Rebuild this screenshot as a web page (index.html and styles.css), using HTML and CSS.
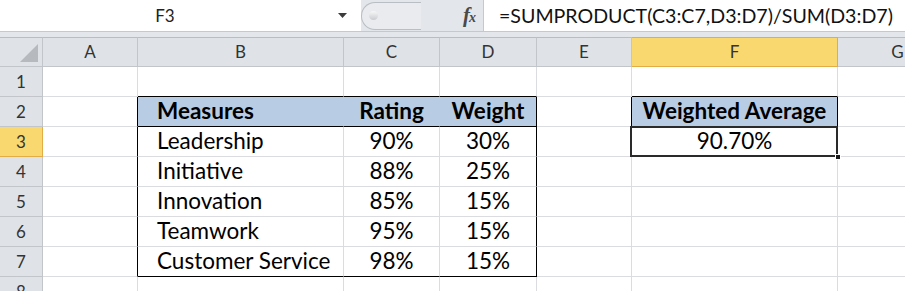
FILE: index.html
```html
<!DOCTYPE html>
<html lang="en">
<head>
    <meta charset="UTF-8">
    <meta name="viewport" content="width=device-width, initial-scale=1.0">
    <title>Weighted Average</title>
    <link rel="stylesheet" href="styles.css">
</head>
<body>
    <div class="formula-bar">
        <div class="name-box">
            <span class="cell-name">F3</span>
            <svg class="drop" width="9" height="5" viewBox="0 0 9 5"><path d="M0 0H9L4.5 5Z" fill="#3c3c3c"/></svg>
        </div>
        <div class="fx-area">
            <div class="pill"><span class="knob"></span></div>
            <span class="fx"><i>f</i><i class="fx-x">x</i></span>
        </div>
        <div class="formula">=SUMPRODUCT(C3:C7,D3:D7)/SUM(D3:D7)</div>
    </div>
    <div class="band"></div>

    <table class="sheet">
        <colgroup>
            <col style="width:43px">
            <col style="width:95px">
            <col style="width:206px">
            <col style="width:96px">
            <col style="width:97px">
            <col style="width:95px">
            <col style="width:206px">
            <col style="width:120px">
        </colgroup>
        <tr class="col-heads">
            <th class="corner"><span class="tri"></span></th>
            <th>A</th><th>B</th><th>C</th><th>D</th><th>E</th><th class="active">F</th><th>G</th>
        </tr>
        <tr>
            <th class="row-head">1</th>
            <td></td><td class="bt"></td><td class="bt"></td><td class="bt"></td><td></td><td class="bt"></td><td></td>
        </tr>
        <tr>
            <th class="row-head">2</th>
            <td class="bl"></td>
            <td class="hdr left fill-b">Measures</td>
            <td class="hdr fill-b">Rating</td>
            <td class="hdr fill-last">Weight</td>
            <td class="bl"></td>
            <td class="hdr fill-last">Weighted Average</td>
            <td></td>
        </tr>
        <tr>
            <th class="row-head active">3</th>
            <td class="bl"></td><td class="left">Leadership</td><td>90%</td><td class="br">30%</td><td></td>
            <td class="selected">90.70%<span class="handle"></span></td><td></td>
        </tr>
        <tr>
            <th class="row-head">4</th>
            <td class="bl"></td><td class="left">Initiative</td><td>88%</td><td class="br">25%</td><td></td><td></td><td></td>
        </tr>
        <tr>
            <th class="row-head">5</th>
            <td class="bl"></td><td class="left">Innovation</td><td>85%</td><td class="br">15%</td><td></td><td></td><td></td>
        </tr>
        <tr>
            <th class="row-head">6</th>
            <td class="bl"></td><td class="left">Teamwork</td><td>95%</td><td class="br">15%</td><td></td><td></td><td></td>
        </tr>
        <tr>
            <th class="row-head">7</th>
            <td class="bl"></td><td class="left bb">Customer Service</td><td class="bb">98%</td><td class="br bb">15%</td><td></td><td></td><td></td>
        </tr>
        <tr>
            <th class="row-head">8</th>
            <td></td><td></td><td></td><td></td><td></td><td></td><td></td>
        </tr>
    </table>
</body>
</html>
```

FILE: styles.css
```css
* {
    margin: 0;
    padding: 0;
    box-sizing: border-box;
}

body {
    width: 905px;
    height: 291px;
    overflow: hidden;
    background: #fff;
    font-family: Lato, "Open Sans", sans-serif;
    color: #000;
}

/* formula bar */
.formula-bar {
    display: flex;
    height: 32px;
    background: #fff;
    border-bottom: 1px solid #c4c9cf;
}

.name-box {
    width: 361px;
    display: flex;
    align-items: center;
}

.cell-name {
    width: 330px;
    text-align: center;
    font-size: 17px;
    color: #222;
}

.drop {
    margin-left: 8px;
}

.fx-area {
    width: 123px;
    display: flex;
    align-items: center;
    justify-content: flex-end;
    background: #e3e6ea;
    border-right: 1px solid #c4c9cf;
    position: relative;
}

.pill {
    position: absolute;
    left: 0;
    top: 2px;
    bottom: 1px;
    width: 60px;
    border: 1px solid #b9bec4;
    border-right: none;
    border-radius: 14px 0 0 14px;
    background: #e9ebee;
}

.knob {
    position: absolute;
    left: 7px;
    top: 8px;
    width: 9px;
    height: 9px;
    border-radius: 50%;
    background: linear-gradient(#f7f7f7, #c9ccd0);
}

.fx {
    font-family: "Liberation Serif", serif;
    font-size: 21px;
    color: #4a4a4a;
    margin-right: 7px;
    font-weight: bold;
}

.fx-x {
    font-size: 14px;
    margin-left: -1px;
}

.formula {
    flex: 1;
    display: flex;
    align-items: center;
    padding-left: 15px;
    font-size: 19.6px;
    color: #111;
}

.band {
    height: 5px;
    background: #e3e6ea;
}

/* grid */
.sheet {
    border-collapse: separate;
    border-spacing: 0;
    table-layout: fixed;
    width: 958px;
}

.sheet tr {
    height: 30px;
}

.sheet th,
.sheet td {
    border-right: 1px solid #dadcdf;
    border-bottom: 1px solid #dadcdf;
    font-size: 22.5px;
    line-height: 26px;
    text-align: center;
    vertical-align: bottom;
    padding-bottom: 2px;
    white-space: nowrap;
    overflow: hidden;
}

.sheet th {
    background: #dfe3e8;
    border-color: #c2c6cb;
    font-weight: normal;
    font-size: 17px;
    color: #333;
    vertical-align: middle;
    padding-bottom: 0;
}

.col-heads th {
    border-top: 1px solid #b9bdc2;
}

.sheet th.active {
    background: #f9d86f;
    border-right-color: #e2ad44;
    border-bottom-color: #e2ad44;
    color: #333;
}

.col-heads th.active {
    border-top-color: #e2ad44;
}

.corner {
    position: relative;
}

.tri {
    position: absolute;
    right: 4px;
    bottom: 4px;
    width: 0;
    height: 0;
    border-left: 18px solid transparent;
    border-bottom: 18px solid #b6b9bd;
}

/* data table */
.sheet td.left {
    text-align: left;
    padding-left: 19px;
}

.sheet td.hdr {
    font-weight: bold;
    background: #b8cce4;
    border-bottom-color: #000;
}

.sheet td.fill-b {
    border-right-color: #b8cce4;
}

.sheet td.fill-last {
    border-right-color: #000;
}

.sheet td.bt {
    border-bottom-color: #000;
}

.sheet td.bl {
    border-right-color: #000;
}

.sheet td.br {
    border-right-color: #000;
}

.sheet td.bb {
    border-bottom-color: #000;
}

.sheet td.selected {
    position: relative;
    overflow: visible;
}

.selected::after {
    content: "";
    position: absolute;
    left: -2px;
    top: -1px;
    right: -1px;
    bottom: -1px;
    border: 2px solid #2a2a2a;
    box-shadow: inset 0 0 0 1px #fff;
}

.handle {
    position: absolute;
    right: -4px;
    bottom: -4px;
    width: 6px;
    height: 6px;
    background: #1a1a1a;
    border: 1px solid #fff;
    z-index: 2;
}
```
